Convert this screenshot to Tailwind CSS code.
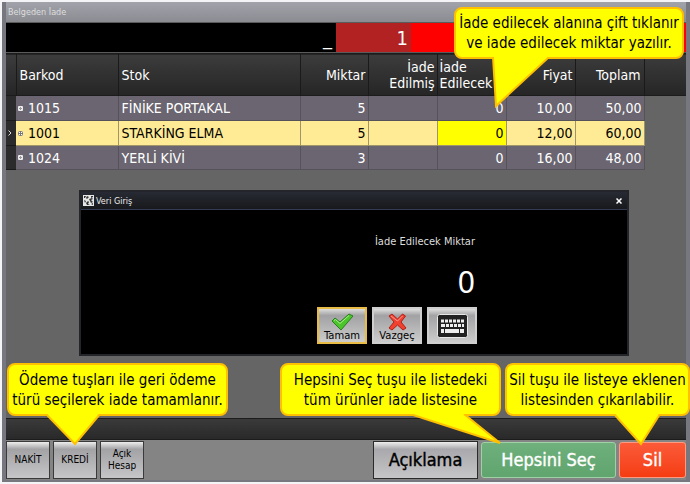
<!DOCTYPE html>
<html lang="tr">
  <head>
    <meta charset="UTF-8" />
    <meta name="viewport" content="width=device-width, initial-scale=1.0" />
    <script src="https://cdn.jsdelivr.net/npm/@tailwindcss/browser@4"></script>
    <title>Belgeden İade</title>
  </head>
  <body class="bg-[#f4f4f6] font-['DejaVu_Sans_Condensed','Noto_Sans',sans-serif] overflow-hidden">
    <div class="relative flex flex-col min-h-screen pt-[2px] pb-[2px] pl-[2px]">
      <main class="flex flex-col grow bg-[#656565] border-x-4 border-[#77777f] border-b-2">
        <!-- title bar -->
        <header class="h-5 flex items-center bg-linear-to-b from-[#a2a3aa] to-[#8b8c92] text-[#dedede]">
          <h1 class="px-[2px] text-[9px] leading-4">Belgeden İade</h1>
        </header>

        <!-- barcode line -->
        <div class="flex h-[31px] border-y border-[#5b5b5b] bg-black text-white text-xl leading-7">
          <div class="grow flex justify-end items-center pr-1">_</div>
          <div class="w-[75px] bg-[#b22222] flex justify-end items-center pr-[3px]">1</div>
          <div class="w-[275px] bg-[#ff0000]"></div>
        </div>

        <table class="w-full table-fixed border-collapse text-white text-[14px] leading-4">
          <colgroup>
            <col class="w-[10px]" />
            <col class="w-[102px]" />
            <col class="w-[182px]" />
            <col class="w-[68px]" />
            <col class="w-[69px]" />
            <col class="w-[69px]" />
            <col class="w-[69px]" />
            <col class="w-[69px]" />
            <col />
          </colgroup>
          <thead>
            <tr class="h-[42px] bg-linear-to-b from-[#3c3c3c] to-[#262626] border-y border-[#1c1c1c]">
              <th class="border-r border-[#1a1a1a]"></th>
              <th class="border-r border-[#1a1a1a] font-normal text-left px-[3px]">Barkod</th>
              <th class="border-r border-[#1a1a1a] font-normal text-left px-[3px]">Stok</th>
              <th class="border-r border-[#1a1a1a] font-normal text-right px-[2px]">Miktar</th>
              <th class="border-r border-[#1a1a1a] font-normal text-right px-[2px]">İade<br />Edilmiş</th>
              <th class="border-r border-[#1a1a1a] font-normal text-left px-[2px]">İade<br />Edilecek</th>
              <th class="border-r border-[#1a1a1a] font-normal text-right px-[2px]">Fiyat</th>
              <th class="border-r border-[#1a1a1a] font-normal text-right px-[3px]">Toplam</th>
              <th></th>
            </tr>
          </thead>
          <tbody>
            <tr class="h-[25px] bg-[#6a6570]">
              <td class="bg-[#2b2b2b] border-b border-[#1a1a1a]"></td>
              <td class="border-r border-b border-[#55525a] pl-[2px]">
                <span class="flex items-center gap-[5px]"><svg class="w-[5px] h-[5px]" viewBox="0 0 5 5"><rect width="5" height="5" rx="1" fill="#eee" /><path d="M1 2.5h3M2.5 1v3" stroke="#999" /></svg>1015</span>
              </td>
              <td class="border-r border-b border-[#55525a] px-[3px]">FİNİKE PORTAKAL</td>
              <td class="border-r border-b border-[#55525a] px-[2px] text-right">5</td>
              <td class="border-r border-b border-[#55525a]"></td>
              <td class="border-r border-b border-[#55525a] px-[2px] text-right">0</td>
              <td class="border-r border-b border-[#55525a] px-[2px] text-right">10,00</td>
              <td class="border-r border-b border-[#55525a] px-[2px] text-right">50,00</td>
              <td class="bg-[#656565]"></td>
            </tr>
            <tr class="h-[25px] bg-[#ffeb96] text-black">
              <td class="bg-[#2b2b2b] border-b border-[#1a1a1a]">
                <svg class="w-[4px] h-[6px] ml-[2px]" viewBox="0 0 4 6"><path d="M.5.5 3 3 .5 5.5" fill="none" stroke="#ddd" /></svg>
              </td>
              <td class="border-r border-b border-[#a0946a] pl-[2px]">
                <span class="flex items-center gap-[5px]"><svg class="w-[5px] h-[5px]" viewBox="0 0 5 5"><rect x=".5" y=".5" width="4" height="4" rx="1" fill="#fff" stroke="#777" /><path d="M1 2.5h3M2.5 1v3" stroke="#777" /></svg>1001</span>
              </td>
              <td class="border-r border-b border-[#a0946a] px-[3px]">STARKİNG ELMA</td>
              <td class="border-r border-b border-[#a0946a] px-[2px] text-right">5</td>
              <td class="border-r border-b border-[#a0946a]"></td>
              <td class="border-r border-b border-[#a0946a] px-[2px] text-right bg-[#ffff00]">0</td>
              <td class="border-r border-b border-[#a0946a] px-[2px] text-right">12,00</td>
              <td class="border-r border-b border-[#a0946a] px-[2px] text-right">60,00</td>
              <td class="bg-[#656565]"></td>
            </tr>
            <tr class="h-[24px] bg-[#6a6570]">
              <td class="bg-[#2b2b2b] border-b border-[#1a1a1a]"></td>
              <td class="border-r border-b border-[#55525a] pl-[2px]">
                <span class="flex items-center gap-[5px]"><svg class="w-[5px] h-[5px]" viewBox="0 0 5 5"><rect width="5" height="5" rx="1" fill="#eee" /><path d="M1 2.5h3M2.5 1v3" stroke="#999" /></svg>1024</span>
              </td>
              <td class="border-r border-b border-[#55525a] px-[3px]">YERLİ KİVİ</td>
              <td class="border-r border-b border-[#55525a] px-[2px] text-right">3</td>
              <td class="border-r border-b border-[#55525a]"></td>
              <td class="border-r border-b border-[#55525a] px-[2px] text-right">0</td>
              <td class="border-r border-b border-[#55525a] px-[2px] text-right">16,00</td>
              <td class="border-r border-b border-[#55525a] px-[2px] text-right">48,00</td>
              <td class="bg-[#656565]"></td>
            </tr>
          </tbody>
        </table>

        <div class="grow"></div>
        <div class="h-[22px] bg-linear-to-b from-[#3a3a3a] to-[#292929] border-y border-[#1c1c1c]"></div>

        <!-- payment and list buttons -->
        <footer class="flex items-center gap-[3px] h-[40px] bg-[#848484]">
          <button class="w-11 h-[38px] border border-[#3a3a3a] bg-linear-to-b from-[#eeeeee] from-0% via-[#a3a3a6] via-20% to-[#c6c6c8] text-black text-[10px] leading-3">NAKİT</button>
          <button class="w-11 h-[38px] border border-[#3a3a3a] bg-linear-to-b from-[#eeeeee] from-0% via-[#a3a3a6] via-20% to-[#c6c6c8] text-black text-[10px] leading-3">KREDİ</button>
          <button class="w-11 h-[38px] border border-[#3a3a3a] bg-linear-to-b from-[#eeeeee] from-0% via-[#a3a3a6] via-20% to-[#c6c6c8] text-black text-[10px] leading-3">Açık<br />Hesap</button>
          <div class="grow"></div>
          <button class="w-[105px] h-[38px] border border-[#2a2a2a] bg-linear-to-b from-[#eeeeee] from-0% via-[#a9a9ad] via-20% to-[#c6c6c8] text-black text-lg leading-6 [-webkit-text-stroke:0.4px]">Açıklama</button>
          <button class="w-[135px] h-9 rounded-[3px] border border-[#9fd0a6] bg-linear-to-b from-[#6fb07c] to-[#60a46e] text-white text-lg leading-6 [-webkit-text-stroke:0.4px]">Hepsini Seç</button>
          <button class="w-[67px] h-9 rounded-[3px] border border-[#ff9a80] bg-linear-to-b from-[#fb5a38] to-[#f53c10] text-white text-lg leading-6 [-webkit-text-stroke:0.4px]">Sil</button>
        </footer>
      </main>

      <!-- quantity dialog -->
      <section role="dialog" aria-labelledby="dialog_title" class="absolute top-[190px] left-[79px] right-[61px] h-[166px] flex flex-col bg-black border-2 border-[#24252a] text-white">
        <div class="flex items-center h-[18px] pl-[2px] pr-1 bg-linear-to-b from-[#272a33] to-[#18191c] border-b border-[#343a52]">
          <svg class="w-[11px] h-[11px] mr-[2px]" viewBox="0 0 11 11">
            <rect width="11" height="11" fill="#e6e6e6" />
            <path d="M1 1h2l-1 2h-1zM4 1l2 1-2 2-1-1zM8 1h2v1l-2 1zM6 4l3-1 1 1-2 1 2 2-2 1-1-2zM1 5l2 1-1 2zM3 8l2-2 1 1-1 2 2 1-3 0zM8 9l2-1v2z" fill="#333" />
          </svg>
          <h2 id="dialog_title" class="grow text-[9px] leading-3 text-[#ececec]">Veri Giriş</h2>
          <button aria-label="Kapat" class="w-2 h-3 flex items-center justify-center">
            <svg class="w-[6px] h-[6px]" viewBox="0 0 6 6"><path d="M.5.5l5 5M5.5.5l-5 5" stroke="#fff" stroke-width="1.5" /></svg>
          </button>
        </div>
        <div class="w-[396px] flex flex-col items-end pt-[24px]">
          <label for="miktar" class="text-[11px] leading-4 pr-[2px] text-[#dddddd]">İade Edilecek Miktar</label>
          <input id="miktar" type="text" value="0" class="w-[120px] mt-[14px] text-right text-[30px] leading-9 h-9 pr-[2px] bg-black outline-none font-['Noto_Sans']" />
          <div class="flex gap-[5px] mt-[7px] text-black text-[10px] leading-[10px]">
            <button class="w-[50px] h-[37px] flex flex-col items-center justify-between pt-[4px] pb-px border-2 border-[#e8bc45] bg-linear-to-b from-[#dedede] from-0% via-[#a2a2a4] via-20% to-[#cccccc] font-['DejaVu_Sans']">
              <svg class="w-[23px] h-[18px] shrink-0" viewBox="0 0 23 18">
                <path d="M1 8l3-3 5 4 9-8 4 2-12 14z" fill="#4cc52b" stroke="#287e1c" stroke-linejoin="round" />
                <path d="M3 7.500l1.500-1 4.500 4 9-8" fill="none" stroke="#a9ef8d" />
              </svg>
              Tamam
            </button>
            <button class="w-[50px] h-[37px] flex flex-col items-center justify-between pt-[4px] pb-px border-2 border-[#cfcfcf] bg-linear-to-b from-[#dedede] from-0% via-[#a2a2a4] via-20% to-[#cccccc] font-['DejaVu_Sans']">
              <svg class="w-[19px] h-[18px] shrink-0" viewBox="0 0 19 18">
                <path d="M1 3l3-2 5.500 5 5-5 3 2-4.500 6 5 6-3 2-5.500-5-5.500 5-3-2 5-6z" fill="#f04030" stroke="#b02018" stroke-linejoin="round" />
                <path d="M3 3l6.500 5 5-5" fill="none" stroke="#ff9c90" />
              </svg>
              Vazgeç
            </button>
            <button aria-label="Klavye" class="w-[50px] h-[37px] flex items-center justify-center border-2 border-[#cfcfcf] bg-linear-to-b from-[#dedede] from-0% via-[#a2a2a4] via-20% to-[#cccccc]">
              <svg class="w-[31px] h-[24px] shrink-0" viewBox="0 0 31 24">
                <rect x=".5" y=".5" width="30" height="23" rx="2" fill="#222" stroke="#e8e8e8" />
                <path d="M4 7h23" stroke="#eee" stroke-width="3" stroke-dasharray="3 1" />
                <path d="M4 11.500h4m1 0h3m1 0h3m1 0h3m1 0h3m1 0h2" stroke="#eee" stroke-width="3" />
                <path d="M4 17h3m1 0h14m1 0h4" stroke="#eee" stroke-width="4" />
              </svg>
            </button>
          </div>
        </div>
      </section>

      <!-- callouts -->
      <aside class="absolute top-[7px] right-[6px] w-[230px] h-[52px] flex items-center justify-center rounded-lg border-2 border-[#ffc000] bg-[#ffff00] text-black text-center text-[15px] leading-5 whitespace-nowrap">
        <p>İade edilecek alanına çift tıklanır<br />ve iade edilecek miktar yazılır.</p>
        <svg class="absolute top-[48px] left-[36px] w-[60px] h-[52px]" viewBox="0 0 60 52">
          <path d="M1 0 4 49 57 0" fill="#ffff00" stroke="#ffc000" stroke-width="2" />
        </svg>
      </aside>
      <aside class="absolute bottom-[68px] left-[7px] w-[221px] h-[53px] flex items-center justify-center rounded-lg border-2 border-[#ffc000] bg-[#ffff00] text-black text-center text-[15px] leading-5 whitespace-nowrap">
        <p>Ödeme tuşları ile geri ödeme<br />türü seçilerek iade tamamlanır.</p>
        <svg class="absolute top-[49px] left-[36px] w-[56px] h-[32px]" viewBox="0 0 56 32">
          <path d="M1 0 30 30 55 0" fill="#ffff00" stroke="#ffc000" stroke-width="2" />
        </svg>
      </aside>
      <aside class="absolute bottom-[68px] right-[189px] w-[221px] h-[53px] flex items-center justify-center rounded-lg border-2 border-[#ffc000] bg-[#ffff00] text-black text-center text-[15px] leading-5 whitespace-nowrap">
        <p>Hepsini Seç tuşu ile listedeki<br />tüm ürünler iade listesine</p>
        <svg class="absolute top-[49px] left-[127px] w-[94px] h-[32px]" viewBox="0 0 94 32">
          <path d="M1 0 91 29 55 0" fill="#ffff00" stroke="#ffc000" stroke-width="2" />
        </svg>
      </aside>
      <aside class="absolute bottom-[68px] right-0 w-[185px] h-[53px] flex items-center justify-center rounded-lg border-2 border-[#ffc000] bg-[#ffff00] text-black text-center text-[15px] leading-5 whitespace-nowrap">
        <p>Sil tuşu ile listeye eklenen<br />listesinden çıkarılabilir.</p>
        <svg class="absolute top-[49px] left-[106px] w-[48px] h-[32px]" viewBox="0 0 48 32">
          <path d="M1 0 28 30 47 0" fill="#ffff00" stroke="#ffc000" stroke-width="2" />
        </svg>
      </aside>
    </div>
  </body>
</html>
